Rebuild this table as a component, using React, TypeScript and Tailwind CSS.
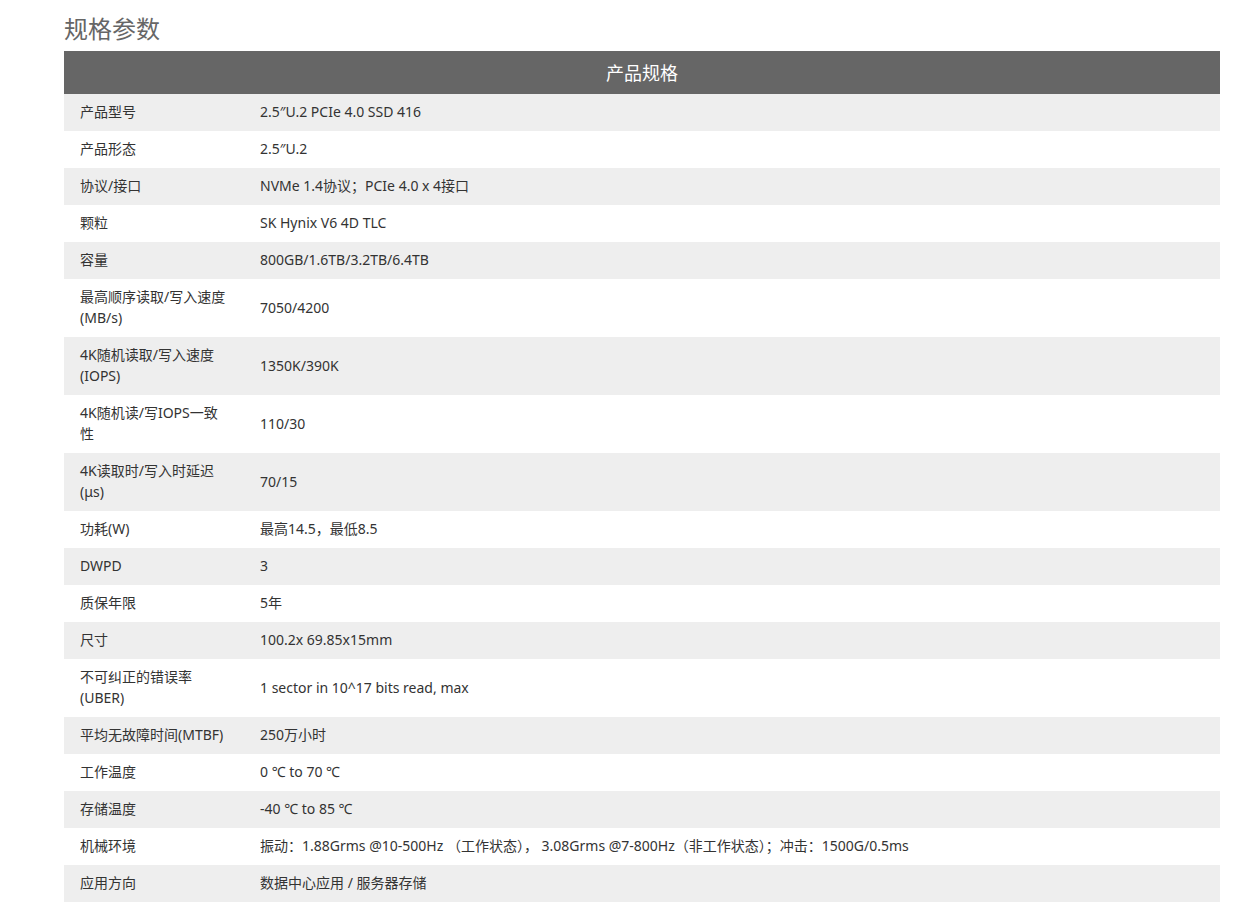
const specs: [string, string][] = [
  ["产品型号", "2.5″U.2 PCIe 4.0 SSD 416"],
  ["产品形态", "2.5″U.2"],
  ["协议/接口", "NVMe 1.4协议；PCIe 4.0 x 4接口"],
  ["颗粒", "SK Hynix V6 4D TLC"],
  ["容量", "800GB/1.6TB/3.2TB/6.4TB"],
  ["最高顺序读取/写入速度\n(MB/s)", "7050/4200"],
  ["4K随机读取/写入速度\n(IOPS)", "1350K/390K"],
  ["4K随机读/写IOPS一致\n性", "110/30"],
  ["4K读取时/写入时延迟\n(μs)", "70/15"],
  ["功耗(W)", "最高14.5，最低8.5"],
  ["DWPD", "3"],
  ["质保年限", "5年"],
  ["尺寸", "100.2x 69.85x15mm"],
  ["不可纠正的错误率\n(UBER)", "1 sector in 10^17 bits read, max"],
  ["平均无故障时间(MTBF)", "250万小时"],
  ["工作温度", "0 ℃ to 70 ℃"],
  ["存储温度", "-40 ℃ to 85 ℃"],
  ["机械环境", "振动：1.88Grms @10-500Hz （工作状态）， 3.08Grms @7-800Hz（非工作状态）；冲击：1500G/0.5ms"],
  ["应用方向", "数据中心应用 / 服务器存储"],
];

export default function App() {
  return (
    <div className="min-h-[919px] bg-white font-['Noto_Sans','Noto_Sans_CJK_SC',sans-serif] text-[#333]">
      <div className="ml-[64px] w-[1156px]">
        <h2 className="pt-[11px] pb-[4px] text-[24px] leading-[36px] font-normal text-[#666]">规格参数</h2>

        <table className="w-full border-collapse text-[14px] leading-[21px]">
          <thead>
            <tr className="bg-[#666]">
              <th colSpan={2} className="h-[43px] pt-[2px] text-center text-[18px] font-normal text-white">
                产品规格
              </th>
            </tr>
          </thead>
          <tbody>
            {specs.map(([label, value], i) => (
              <tr key={i} className={i % 2 === 0 ? "bg-[#eeeeee]" : "bg-white"}>
                <td className="w-[180px] pt-[7px] pb-[9px] pl-4 pr-2 align-middle whitespace-pre">{label}</td>
                <td className="pt-[7px] pb-[9px] pl-4 align-middle">{value}</td>
              </tr>
            ))}
          </tbody>
        </table>
      </div>
    </div>
  );
}
